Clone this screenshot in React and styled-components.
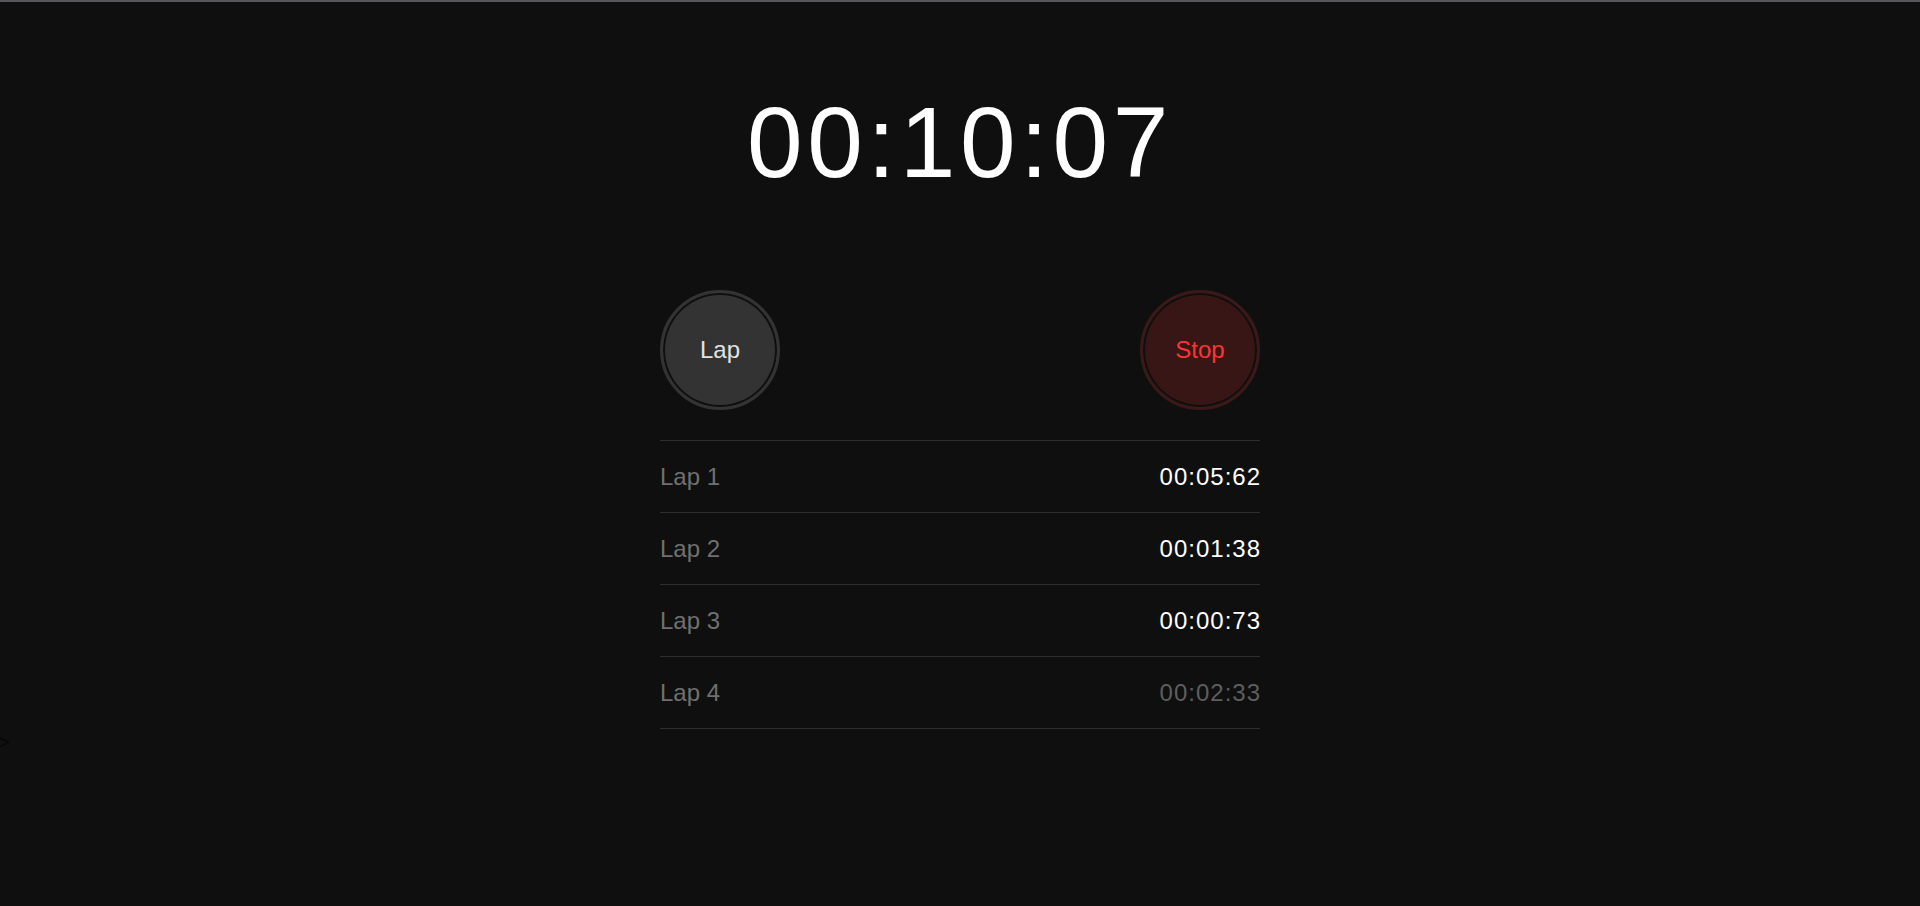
import React from "react";
import styled, { createGlobalStyle } from "styled-components";

const Global = createGlobalStyle`
  html, body {
    margin: 0;
    padding: 0;
    background: #0f0f0f;
  }
  body {
    font-family: "Liberation Sans", Arial, sans-serif;
    color: #fff;
  }
`;

const Page = styled.div`
  min-height: 904px;
  border-top: 2px solid #56565b;
  background: #0f0f0f;
  display: flex;
  flex-direction: column;
`;

const Watch = styled.main`
  width: 600px;
  margin: 0 auto;
  padding-top: 83px;
  display: flex;
  flex-direction: column;
`;

const Display = styled.div`
  font-size: 100px;
  line-height: 115px;
  letter-spacing: 4.6px;
  text-align: center;
  color: #ffffff;
`;

const Controls = styled.div`
  margin-top: 90px;
  display: flex;
  justify-content: space-between;
  align-items: center;
`;

const RoundButton = styled.button`
  box-sizing: border-box;
  width: 120px;
  height: 120px;
  border-radius: 50%;
  border: 3px solid ${(p) => p.$ring};
  background: ${(p) => p.$fill};
  box-shadow: inset 0 0 0 2px #0f0f0f;
  color: ${(p) => p.$text};
  font-family: "Liberation Sans", Arial, sans-serif;
  font-size: 24px;
  padding: 0;
  cursor: pointer;
  display: flex;
  align-items: center;
  justify-content: center;
`;

const LapList = styled.ul`
  list-style: none;
  margin: 30px 0 0;
  padding: 0;
  border-bottom: 1px solid #2e2e2e;
`;

const LapRow = styled.li`
  height: 71px;
  border-top: 1px solid #2e2e2e;
  display: flex;
  align-items: center;
  justify-content: space-between;
  font-size: 24px;
`;

const LapName = styled.span`
  color: #707070;
`;

const LapTime = styled.span`
  color: ${(p) => (p.$dim ? "#5e5e5e" : "#ffffff")};
  letter-spacing: 1px;
  margin-right: -1px;
`;

const Stray = styled.div`
  margin-left: -2px;
  margin-top: 3px;
  font-size: 20px;
  line-height: 20px;
  color: #060606;
`;

const laps = [
  { name: "Lap 1", time: "00:05:62" },
  { name: "Lap 2", time: "00:01:38" },
  { name: "Lap 3", time: "00:00:73" },
  { name: "Lap 4", time: "00:02:33", dim: true },
];

export default function App() {
  return (
    <>
      <Global />
      <Page>
        <Watch>
          <Display>00:10:07</Display>
          <Controls>
            <RoundButton $ring="#333333" $fill="#333333" $text="#e2e2e2">
              Lap
            </RoundButton>
            <RoundButton $ring="#3a1a19" $fill="#371615" $text="#ff3333">
              Stop
            </RoundButton>
          </Controls>
          <LapList>
            {laps.map((l) => (
              <LapRow key={l.name}>
                <LapName>{l.name}</LapName>
                <LapTime $dim={l.dim}>{l.time}</LapTime>
              </LapRow>
            ))}
          </LapList>
        </Watch>
        <Stray>&gt;</Stray>
      </Page>
    </>
  );
}
